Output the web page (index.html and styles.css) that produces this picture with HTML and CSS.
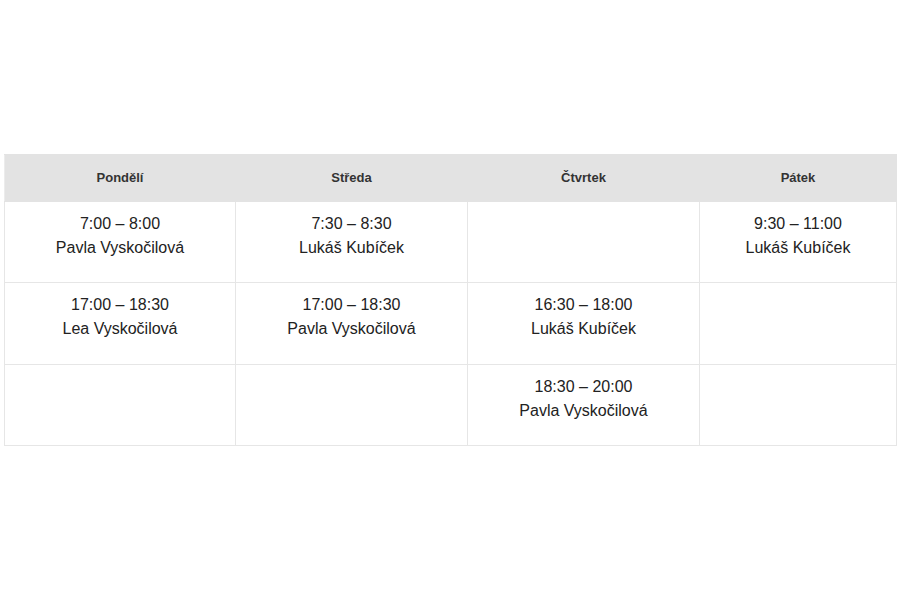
FILE: index.html
```html
<!DOCTYPE html>
<html lang="cs">
<head>
<meta charset="utf-8">
<title>Rozvrh</title>
<link rel="stylesheet" href="styles.css">
</head>
<body>
<main class="page">
  <table class="schedule">
    <colgroup>
      <col class="c1"><col class="c2"><col class="c3"><col class="c4">
    </colgroup>
    <thead>
      <tr><th>Pondělí</th><th>Středa</th><th>Čtvrtek</th><th>Pátek</th></tr>
    </thead>
    <tbody>
      <tr>
        <td>7:00 – 8:00<br>Pavla Vyskočilová</td>
        <td>7:30 – 8:30<br>Lukáš Kubíček</td>
        <td></td>
        <td>9:30 – 11:00<br>Lukáš Kubíček</td>
      </tr>
      <tr class="tall">
        <td>17:00 – 18:30<br>Lea Vyskočilová</td>
        <td>17:00 – 18:30<br>Pavla Vyskočilová</td>
        <td>16:30 – 18:00<br>Lukáš Kubíček</td>
        <td></td>
      </tr>
      <tr>
        <td></td>
        <td></td>
        <td>18:30 – 20:00<br>Pavla Vyskočilová</td>
        <td></td>
      </tr>
    </tbody>
  </table>
</main>
</body>
</html>
```
FILE: styles.css
```css
html, body {
  margin: 0;
  padding: 0;
  background: #fff;
}
.page {
  min-height: 600px;
  display: flex;
  align-items: center;
  padding: 0 4px 1px;
  box-sizing: border-box;
  font-family: "Liberation Sans", Arial, sans-serif;
}
.schedule {
  width: 892px;
  border-collapse: collapse;
  table-layout: fixed;
}
.c1 { width: 231px; }
.c2 { width: 232px; }
.c3 { width: 232px; }
.c4 { width: 197px; }
.schedule th {
  background: #e3e3e3;
  border: 1px solid #e3e3e3;
  border-left-color: #ececec;
  font-size: 13px;
  font-weight: bold;
  color: #333;
  line-height: 15px;
  padding: 15px 8px 16px;
  text-align: center;
}
.schedule td {
  border: 1px solid #e6e6e6;
  font-size: 16px;
  line-height: 24px;
  color: #222;
  text-align: center;
  vertical-align: top;
  padding: 10px 8px 22px;
  height: 48px;
}
.schedule .tall td {
  padding-bottom: 23px;
}
```
